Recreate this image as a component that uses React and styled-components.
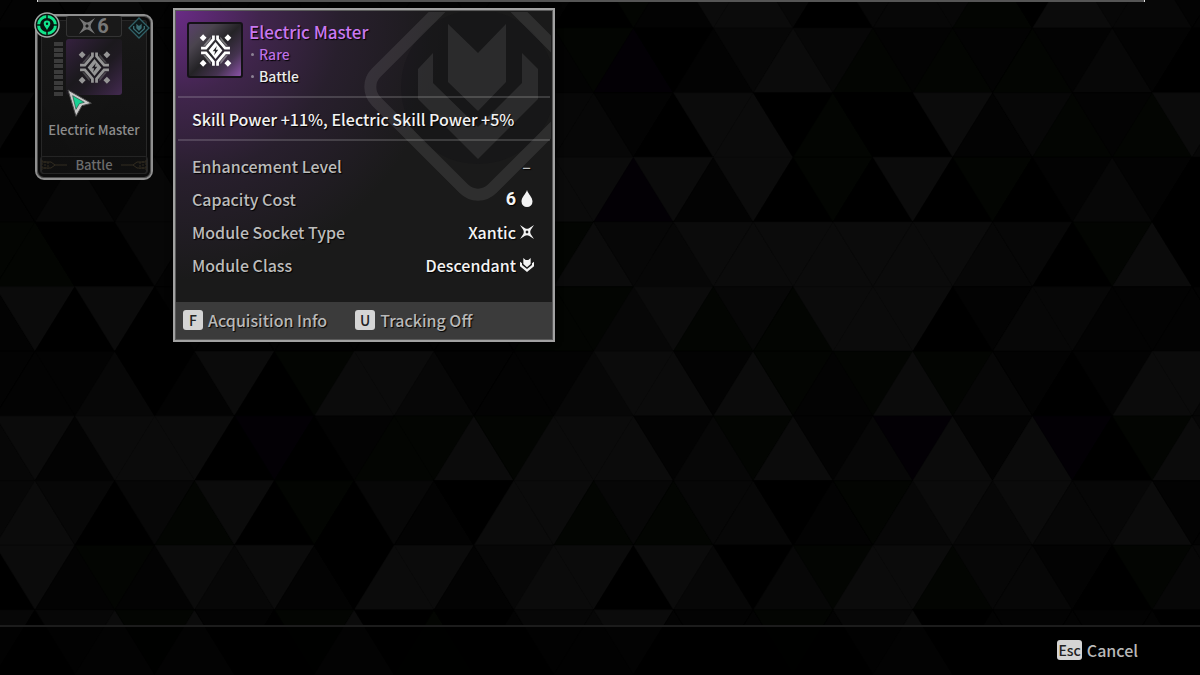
import styled, { createGlobalStyle } from "styled-components";

const SHADES = {
    0: "#000000",
    1: "#030303",
    2: "#070707",
    3: "#0b0b0b",
    g: "#030502",
    p: "#030005",
};

// one string per row of triangles, one character per triangle
const TRIANGLE_ROWS = [
    "1112111111111110g13320222g032211",
    "001111111111111gp01232g1g1g12100",
    "202111111111112210330g00312g1g32",
    "1121211111111133p3130g030g012100",
    "gg002111111111g3223333333220g300",
    "13030111111111gg23g2g33301221111",
    "11120130g33211123313g1g3g2101332",
    "2313330p01gg3g33312g312p313p0g32",
    "23202g30g021033g2g2201g232322311",
    "031g13231033123303202g33g2210g22",
    "2023g310g30g01223111g12301111100",
];
const HALF = 39.9;
const ROW_HEIGHT = 64.65;

const STATS = [
    { label: "Enhancement Level", value: "–", dim: true },
    { label: "Capacity Cost", value: "6", icon: DropIcon, number: true },
    { label: "Module Socket Type", value: "Xantic", icon: XanticIcon },
    { label: "Module Class", value: "Descendant", icon: DescendantIcon },
];

export default function App(){
    return (
        <Screen>
            <GlobalStyle />
            <Backdrop />
            <Content>
                <TopRule />
                <Main>
                    <ModuleCard />
                    <ModuleTooltip />
                </Main>
                <Footer>
                    <KeyButton type="button"><Key>Esc</Key>Cancel</KeyButton>
                </Footer>
            </Content>
        </Screen>
    )
};

function Backdrop(){
    return (
        <BackdropSvg viewBox="0 0 1200 675" preserveAspectRatio="xMidYMid slice" aria-hidden="true">
            {TRIANGLE_ROWS.map((row, r) => [...row].map((shade, c) => {
                const x = -4.8 + c * HALF;
                const top = 28 + (r - 1) * ROW_HEIGHT;
                const bottom = top + ROW_HEIGHT;
                const pointsUp = (r + c) % 2 === 1;
                const tip = pointsUp ? top : bottom;
                const base = pointsUp ? bottom : top;
                return (
                    <polygon
                        key={`${r}-${c}`}
                        points={`${x},${tip} ${x - HALF},${base} ${x + HALF},${base}`}
                        fill={SHADES[shade]}
                        stroke={SHADES[shade]}
                        strokeWidth="0.5"
                    />
                )
            }))}
        </BackdropSvg>
    )
};

function ModuleCard(){
    return (
        <Card type="button">
            <CardPlaque>
                <XanticIcon size={16} />
                <Cost $size={20}>6</Cost>
            </CardPlaque>
            <CardMiddle>
                <Levels>
                    {Array.from({ length: 10 }, (_, i) => <Level key={i} />)}
                </Levels>
                <Tile $size={56} $dim><ElectricIcon size={33} /></Tile>
            </CardMiddle>
            <CardName>Electric Master</CardName>
            <CardType>
                <Circuit />
                <span>Battle</span>
                <Circuit flip />
            </CardType>
            <CornerBadge $side="left"><TrackedIcon /></CornerBadge>
            <CornerBadge $side="right"><ClassBadgeIcon /></CornerBadge>
            <Pointer><PointerIcon /></Pointer>
        </Card>
    )
};

function ModuleTooltip(){
    return (
        <Tooltip>
            <Watermark viewBox="360 12 190 194" aria-hidden="true">
                <circle cx="477" cy="87" r="77" fill="#0c0c10" fillOpacity="0.18" />
                <g fill="#ffffff" fillOpacity="0.09">
                    <path d="M447 24L477 53L505 24V82L477 111L447 82Z" />
                    <path d="M432 53V83L477 127L521 83V53L537 69V99L477 159L417 99V69Z" />
                </g>
                <rect
                    x="395" y="5" width="164" height="164" rx="20"
                    transform="rotate(45 477 87)"
                    fill="none" stroke="#ffffff" strokeOpacity="0.09" strokeWidth="12"
                />
            </Watermark>
            <TooltipHeader>
                <Tile $size={56} $framed><ElectricIcon size={33} /></Tile>
                <div>
                    <Title>Electric Master</Title>
                    <Tags>
                        <Tag $rare>Rare</Tag>
                        <Tag>Battle</Tag>
                    </Tags>
                </div>
            </TooltipHeader>
            <Description>Skill Power +11%, Electric Skill Power +5%</Description>
            <Stats>
                {STATS.map(({ label, value, icon: Icon, number, dim }) => (
                    <Stat key={label}>
                        <dt>{label}</dt>
                        <StatValue $dim={dim}>
                            {number ? <Cost $size={18}>{value}</Cost> : value}
                            {Icon && <Icon size={14} />}
                        </StatValue>
                    </Stat>
                ))}
            </Stats>
            <TooltipFooter>
                <KeyButton type="button"><Key>F</Key>Acquisition Info</KeyButton>
                <KeyButton type="button"><Key>U</Key>Tracking Off</KeyButton>
            </TooltipFooter>
        </Tooltip>
    )
};

function ElectricIcon({ size }){
    return (
        <svg width={size} height={size} viewBox="0 0 96 96" fill="currentColor" aria-hidden="true">
            <path d="M12 1L22 11L12 21L2 11ZM84 1L94 11L84 21L74 11ZM12 75L22 85L12 95L2 85ZM84 75L94 85L84 95L74 85Z" />
            <path fillRule="evenodd" d="M48 23L68 48L48 73L28 48ZM52 35L40 50H47L44 62L56 46H49Z" />
            <path
                fill="none" stroke="currentColor" strokeWidth="8"
                d="M42 4V15L20 41H6M54 4V15L76 41H90M42 92V81L20 55H6M54 92V81L76 55H90"
            />
            <path d="M34 8V16L19 34H12L30 12ZM62 8V16L77 34H84L66 12ZM34 88V80L19 62H12L30 84ZM62 88V80L77 62H84L66 84Z" fillOpacity="0.35" />
        </svg>
    )
};

function XanticIcon({ size }){
    return (
        <svg width={size} height={size} viewBox="0 0 42 42" fill="currentColor" aria-hidden="true">
            <path
                fillRule="evenodd"
                d="M0 0L15 10Q21 13 27 10L42 0L32 15Q29 21 32 27L42 42L27 32Q21 29 15 32L0 42L10 27Q13 21 10 15ZM21 16L16 21L21 26L26 21Z"
            />
        </svg>
    )
};

function DropIcon({ size }){
    return (
        <svg width={size} height="17" viewBox="0 0 14 17" fill="currentColor" aria-hidden="true">
            <path d="M7 0C8 4 12.500 7 12.500 11.500A5.500 5.500 0 0 1 1.500 11.500C1.500 7 6 4 7 0Z" />
        </svg>
    )
};

function DescendantIcon({ size }){
    return (
        <svg width={size} height={size} viewBox="0 0 42 42" fill="currentColor" aria-hidden="true">
            <path d="M10 0L17 6H25L32 0V18L21 28L10 18Z" />
            <path d="M0 11L6 16V21L21 33L36 21V16L42 11V25L21 42L0 25Z" />
        </svg>
    )
};

function TrackedIcon(){
    return (
        <svg width="26" height="26" viewBox="0 0 26 26" aria-hidden="true">
            <circle cx="13" cy="13" r="12" fill="#07140f" stroke="#a3a8a6" strokeWidth="1.500" />
            <circle cx="13" cy="13" r="8.500" fill="none" stroke="#10e58b" strokeWidth="3" />
            <path d="M13 2V7M13 19V24M2 13H7M19 13H24" stroke="#07140f" strokeWidth="1.500" />
            <path
                fillRule="evenodd"
                d="M13 8.500A3.300 3.300 0 0 1 16.300 11.800C16.300 14 14 15.500 13 18C12 15.500 9.700 14 9.700 11.800A3.300 3.300 0 0 1 13 8.500ZM13 10.500A1.200 1.200 0 1 0 13 12.900A1.200 1.200 0 1 0 13 10.500Z"
                fill="#10e58b"
            />
        </svg>
    )
};

function ClassBadgeIcon(){
    return (
        <svg width="22" height="22" viewBox="0 0 66 66" aria-hidden="true">
            <path d="M33 3L63 33L33 63L3 33Z" fill="#0d1718" stroke="#2f5f65" strokeWidth="4" />
            <path d="M25 20L33 27L41 20V34L33 42L25 34Z" fill="#3a6d73" />
            <path d="M17 27V35L33 50L49 35V27" fill="none" stroke="#3a6d73" strokeWidth="4" />
        </svg>
    )
};

function PointerIcon(){
    return (
        <svg width="26" height="29" viewBox="0 0 78 87" aria-hidden="true">
            <path d="M3 3L73 43L45 50L27 82Z" fill="#c8c8c8" stroke="#4a4a4a" strokeWidth="3" />
            <path d="M17 20L52 40L37 44L27 61Z" fill="#16d193" stroke="#2b4a40" strokeWidth="2" />
        </svg>
    )
};

function Circuit({ flip }){
    return (
        <svg width="26" height="14" viewBox="0 0 26 14" fill="none" stroke="#322c20" aria-hidden="true">
            <g transform={flip ? "matrix(-1 0 0 1 26 0)" : undefined}>
                <path d="M1 4H10L14 7H26M1 10H10L14 7" />
                <path d="M1 2V12M4 3V11M7 4V11" strokeDasharray="2 1" />
            </g>
        </svg>
    )
};

const GlobalStyle = createGlobalStyle`
    * {
        box-sizing: border-box;
    }
    body {
        margin: 0;
        background: #000000;
        color: #c4c4c4;
        font: 500 16px/24px "Noto Sans CJK KR", "Noto Sans", sans-serif;
    }
`;

const Screen = styled.div`
    display: grid;
    min-height: 100vh;
    overflow: hidden;
`;
const BackdropSvg = styled.svg`
    grid-area: 1 / 1;
    width: 100%;
    height: 100%;
    min-height: 0;
    contain: size;
`;
const Content = styled.div`
    grid-area: 1 / 1;
    display: flex;
    flex-direction: column;
    min-width: 0;
    z-index: 1;
`;
const TopRule = styled.div`
    height: 2px;
    margin: 0 55px 0 37px;
    background: #555555;
    border: solid #e0e0e0;
    border-width: 0 1px;
`;
const Main = styled.main`
    flex: 1;
    display: flex;
    align-items: flex-start;
    gap: 20px;
    padding: 6px 35px 24px;
`;
const Footer = styled.footer`
    display: flex;
    justify-content: flex-end;
    align-items: center;
    height: 50px;
    padding: 0 62px 2px;
    border-top: 2px solid #1c1c1c;
    background: rgba(0, 0, 0, 0.7);
`;

const KeyButton = styled.button`
    display: flex;
    align-items: center;
    gap: 5px;
    padding: 0;
    border: 0;
    background: none;
    color: #b8b8b8;
    font: inherit;
    line-height: 24px;
    text-shadow: 1px 1px 1px #000000;
    cursor: pointer;
`;
const Key = styled.kbd`
    min-width: 20px;
    padding: 0 1px;
    border-radius: 3px;
    background: #d4d4d4;
    color: #222222;
    font: inherit;
    font-size: 14px;
    line-height: 20px;
    text-align: center;
    text-shadow: none;
`;
const Cost = styled.span`
    font-family: Roboto, "Noto Sans CJK KR", sans-serif;
    font-weight: 700;
    font-size: ${({ $size }) => $size}px;
    line-height: 20px;
`;
const Tile = styled.div`
    display: flex;
    flex: none;
    align-items: center;
    justify-content: center;
    width: ${({ $size }) => $size}px;
    height: ${({ $size }) => $size}px;
    border-radius: 3px;
    border: ${({ $framed }) => ($framed ? "2px solid #141216" : "0")};
    color: ${({ $dim }) => ($dim ? "#959595" : "#ffffff")};
    background: ${({ $dim }) => ($dim
        ? "linear-gradient(135deg, #35213f, #1b191d 45%, #1f1a22 60%, #432a50)"
        : "linear-gradient(135deg, #59406a, #4a444e 25%, #242326 50%, #453350 75%, #8a52a6)")};
`;

const Card = styled.button`
    position: relative;
    display: flex;
    flex-direction: column;
    align-items: center;
    width: 118px;
    height: 166px;
    margin: 6px 0 0;
    padding: 0 2px;
    border: 2px solid #8f8f8f;
    border-radius: 9px;
    background: linear-gradient(rgba(26, 26, 26, 0.9), rgba(16, 16, 16, 0.9));
    box-shadow: inset 0 0 0 1px #4c4c4c, inset 0 0 0 4px #0b0b0b, inset 0 0 0 5px #272727;
    color: #8c8c8c;
    font: inherit;
    cursor: pointer;
`;
const CardPlaque = styled.div`
    display: flex;
    align-items: center;
    justify-content: center;
    gap: 2px;
    width: 56px;
    height: 21px;
    border: 1px solid #333333;
    border-top: 0;
    border-radius: 3px;
    background: #191919;
    color: #777777;
`;
const CardMiddle = styled.div`
    display: flex;
    align-self: stretch;
    gap: 3px;
    padding: 2px 0 0 15px;
`;
const Levels = styled.div`
    display: flex;
    flex-direction: column;
    justify-content: space-between;
    width: 9px;
    height: 54px;
    margin-top: 3px;
`;
const Level = styled.div`
    height: 4px;
    background: #3b3b3b;
`;
const CardName = styled.div`
    margin-top: 24px;
    font-size: 13px;
    line-height: 20px;
    white-space: nowrap;
`;
const CardType = styled.div`
    display: flex;
    align-items: center;
    justify-content: space-between;
    width: 108px;
    margin-top: 16px;
    border: 1px solid #242424;
    border-radius: 3px;
    color: #6c6c6c;
    font-size: 13px;
    line-height: 16px;
`;
const CornerBadge = styled.span`
    position: absolute;
    top: ${({ $side }) => ($side === "left" ? -4 : 1)}px;
    ${({ $side }) => $side}: ${({ $side }) => ($side === "left" ? -3 : 1)}px;
    display: flex;
`;
const Pointer = styled.span`
    position: absolute;
    top: 73px;
    left: 30px;
    display: flex;
`;

const Tooltip = styled.section`
    position: relative;
    width: 382px;
    border: 2px solid #a2a2a2;
    padding: 1px;
    background: radial-gradient(circle 270px at 0 0, #6a2b86, #40254c 32%, #281f2d 62%, #1a1a1a) #1a1a1a;
    box-shadow: inset 0 0 0 1px #5a5a5a, 0 0 6px #000000;
    text-shadow: 1px 1px 1px #000000;
`;
const Watermark = styled.svg`
    position: absolute;
    top: 2px;
    right: 2px;
    width: 190px;
    height: 194px;
`;
const TooltipHeader = styled.header`
    position: relative;
    display: flex;
    gap: 6px;
    height: 87px;
    margin: 0 2px;
    padding: 11px 9px 0;
    border-bottom: 2px solid rgba(255, 255, 255, 0.16);
`;
const Title = styled.h1`
    margin: 0;
    color: #c978f0;
    font-size: 17px;
    font-weight: 500;
    line-height: 20px;
`;
const Tags = styled.ul`
    margin: 0;
    padding: 1px 0 0;
    list-style: none;
`;
const Tag = styled.li`
    display: flex;
    align-items: center;
    gap: 5px;
    padding-left: 2px;
    color: ${({ $rare }) => ($rare ? "#bd70e4" : "#ececec")};
    font-size: 14px;
    line-height: 22px;

    &::before {
        content: "";
        width: 3px;
        height: 3px;
        border-radius: 50%;
        background: #8c8294;
    }
`;
const Description = styled.p`
    position: relative;
    margin: 0 2px;
    padding: 9px 14px 8px;
    border-bottom: 2px solid rgba(255, 255, 255, 0.16);
    color: #f2f2f2;
    white-space: nowrap;
`;
const Stats = styled.dl`
    position: relative;
    display: grid;
    grid-auto-rows: 33px;
    margin: 0;
    padding: 8px 18px 21px 16px;
`;
const Stat = styled.div`
    display: flex;
    justify-content: space-between;
    align-items: center;
    color: #bcbcbc;
`;
const StatValue = styled.dd`
    display: flex;
    align-items: center;
    gap: 4px;
    margin: 0;
    padding-right: ${({ $dim }) => ($dim ? 3 : 0)}px;
    color: ${({ $dim }) => ($dim ? "#bcbcbc" : "#f4f4f4")};
`;
const TooltipFooter = styled.footer`
    position: relative;
    display: flex;
    align-items: center;
    gap: 28px;
    height: 37px;
    padding: 0 7px 2px;
    background: #3b3b3b;
`;
